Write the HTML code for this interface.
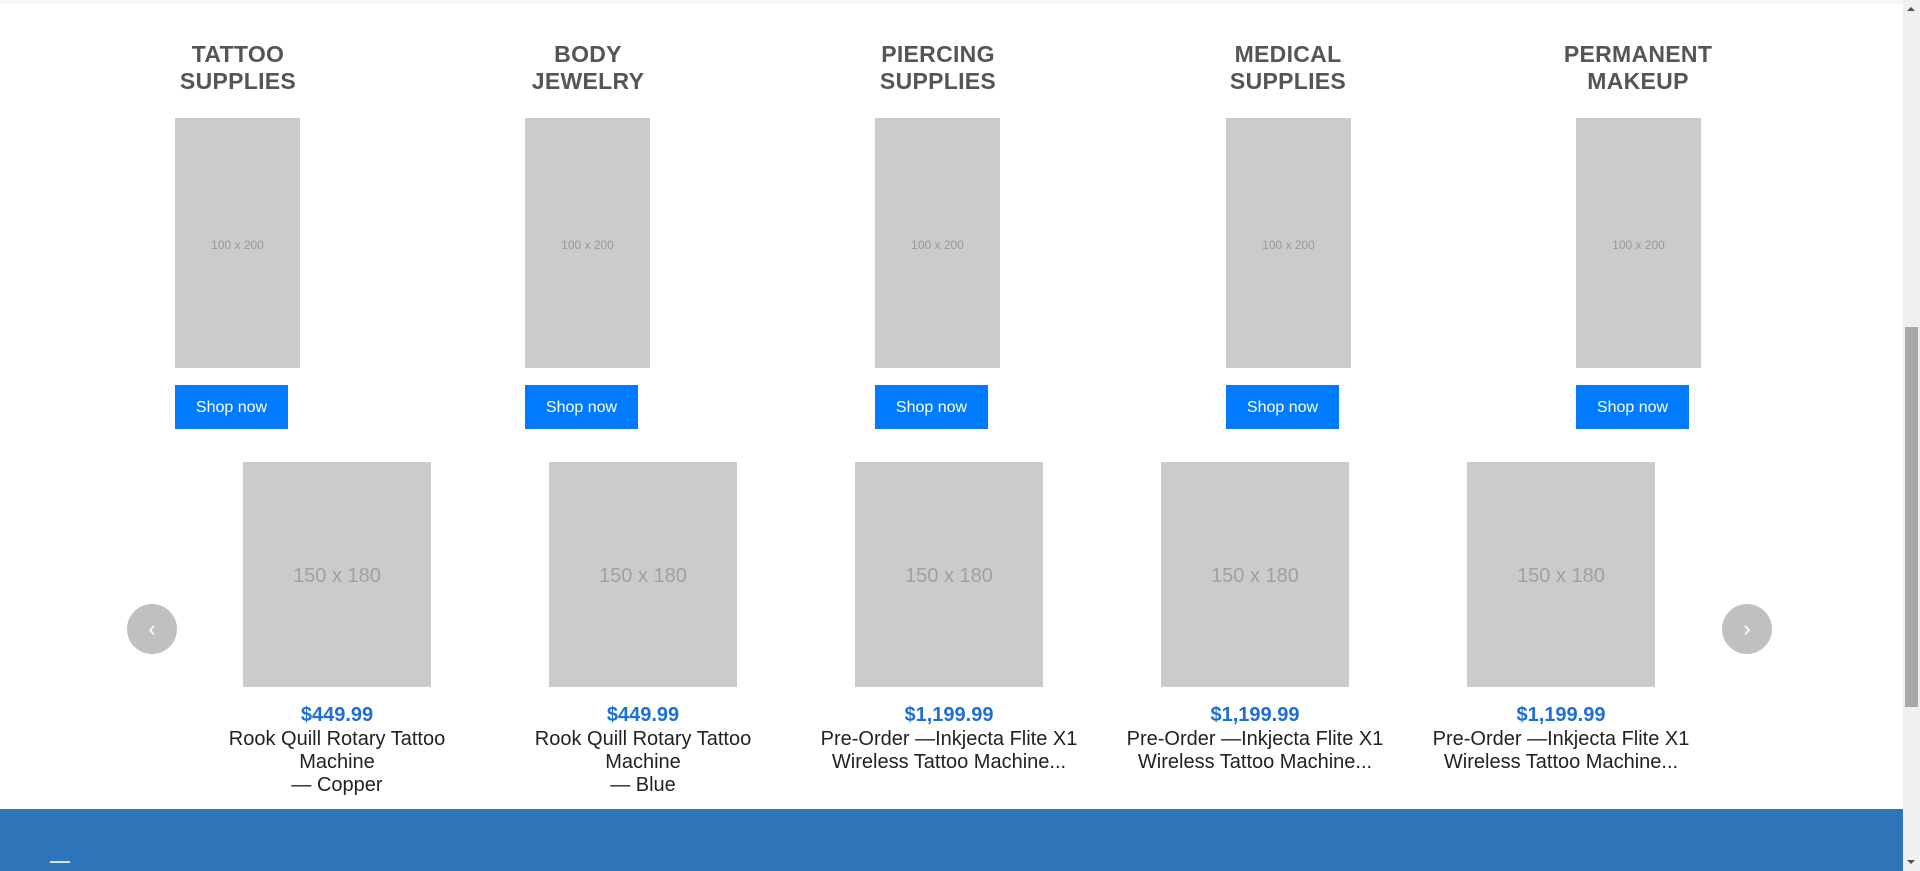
<!DOCTYPE html>
<html><head><meta charset="utf-8"><style>
*{margin:0;padding:0;box-sizing:border-box}
body{width:1920px;height:871px;overflow:hidden;background:#fff;font-family:"Liberation Sans",Arial,sans-serif;position:relative}
.top{position:absolute;left:0;top:0;width:1903px;height:4px;background:#fdf4fa}
.cat{position:absolute;top:41px;width:300px;text-align:center}
.cat h2{font-size:23px;line-height:27px;font-weight:bold;color:#555;letter-spacing:0.3px}
.box{position:absolute;top:118px;width:125px;height:250px;background:#cbcbcb;color:#999;font-size:12px;display:flex;align-items:center;justify-content:center;padding-top:4px}
.btn{position:absolute;top:385px;width:113px;height:44px;background:#007bff;color:#fff;font-size:16px;display:flex;align-items:center;justify-content:center;padding-top:1px}
.pimg{position:absolute;top:462px;width:188px;height:225px;background:#cbcbcb;color:#a0a0a0;font-size:20px;display:flex;align-items:center;justify-content:center;padding-top:4px}
.pt{position:absolute;top:703px;width:300px;text-align:center;font-size:20px;line-height:23px;color:#222}
.pt b{color:#1b6fd6;display:block;line-height:25px}
.arr{position:absolute;top:604px;width:50px;height:50px;border-radius:50%;background:#c0c0c0;color:#fff;font-size:22px;display:flex;align-items:center;justify-content:center}
.foot{position:absolute;left:0;top:809px;width:1903px;height:62px;background:#2e76b9}
.sb{position:absolute;right:0;top:0;width:17px;height:871px;background:#f0f0f0}
.thumb{position:absolute;left:2px;top:327px;width:13px;height:380px;background:#a8a8a8}
</style></head><body>
<div class="top"></div>

<div class="cat" style="left:88px"><h2>TATTOO<br>SUPPLIES</h2></div>
<div class="cat" style="left:438px"><h2>BODY<br>JEWELRY</h2></div>
<div class="cat" style="left:788px"><h2>PIERCING<br>SUPPLIES</h2></div>
<div class="cat" style="left:1138px"><h2>MEDICAL<br>SUPPLIES</h2></div>
<div class="cat" style="left:1488px"><h2>PERMANENT<br>MAKEUP</h2></div>

<div class="box" style="left:175px">100 x 200</div>
<div class="box" style="left:525px">100 x 200</div>
<div class="box" style="left:875px">100 x 200</div>
<div class="box" style="left:1226px">100 x 200</div>
<div class="box" style="left:1576px">100 x 200</div>

<div class="btn" style="left:175px">Shop now</div>
<div class="btn" style="left:525px">Shop now</div>
<div class="btn" style="left:875px">Shop now</div>
<div class="btn" style="left:1226px">Shop now</div>
<div class="btn" style="left:1576px">Shop now</div>

<div class="pimg" style="left:243px">150 x 180</div>
<div class="pimg" style="left:549px">150 x 180</div>
<div class="pimg" style="left:855px">150 x 180</div>
<div class="pimg" style="left:1161px">150 x 180</div>
<div class="pimg" style="left:1467px">150 x 180</div>

<div class="pt" style="left:187px"><b>$449.99</b>Rook Quill Rotary Tattoo<br>Machine<br>— Copper</div>
<div class="pt" style="left:493px"><b>$449.99</b>Rook Quill Rotary Tattoo<br>Machine<br>— Blue</div>
<div class="pt" style="left:799px"><b>$1,199.99</b>Pre-Order —Inkjecta Flite X1<br>Wireless Tattoo Machine...</div>
<div class="pt" style="left:1105px"><b>$1,199.99</b>Pre-Order —Inkjecta Flite X1<br>Wireless Tattoo Machine...</div>
<div class="pt" style="left:1411px"><b>$1,199.99</b>Pre-Order —Inkjecta Flite X1<br>Wireless Tattoo Machine...</div>

<div class="arr" style="left:127px">‹</div>
<div class="arr" style="left:1722px">›</div>

<div class="foot"><div style="position:absolute;left:50px;top:52px;width:20px;height:2px;background:#fff;opacity:.8"></div></div>

<div class="sb">
<div style="position:absolute;left:4px;top:7px;width:0;height:0;border-left:4px solid transparent;border-right:4px solid transparent;border-bottom:4px solid #505050"></div>
<div class="thumb"></div>
<div style="position:absolute;left:4px;bottom:7px;width:0;height:0;border-left:4px solid transparent;border-right:4px solid transparent;border-top:4px solid #505050"></div>
</div>
</body></html>
